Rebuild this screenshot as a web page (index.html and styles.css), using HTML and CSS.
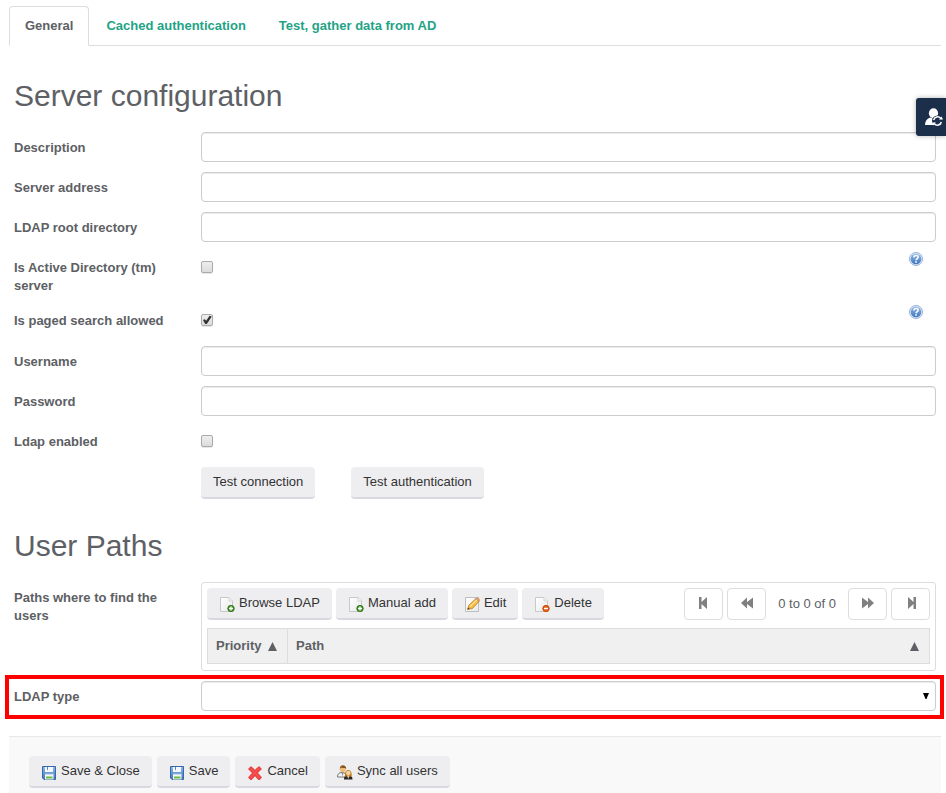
FILE: index.html
```html
<!DOCTYPE html>
<html lang="en">
<head>
<meta charset="utf-8">
<title>Server configuration</title>
<link rel="stylesheet" href="styles.css">
</head>
<body>
<svg class="defs" width="0" height="0" aria-hidden="true">
  <defs>
    <linearGradient id="blue" x1="0" y1="0" x2="0" y2="1"><stop offset="0" stop-color="#8fb8e8"/><stop offset="1" stop-color="#3f75bd"/></linearGradient>
    <linearGradient id="paper" x1="0" y1="0" x2="1" y2="1"><stop offset="0" stop-color="#ffffff"/><stop offset="1" stop-color="#e9e9e9"/></linearGradient>
  </defs>
  <symbol id="page" viewBox="0 0 16 16">
    <path d="M1.500 1.500h8.500l3.500 3.500v10.500h-12z" fill="url(#paper)" stroke="#c8c8c8"/>
    <path d="M10 1.500v3.500h3.500" fill="#f4f4f4" stroke="#d5d5d5"/>
  </symbol>
  <symbol id="page-add" viewBox="0 0 16 16">
    <use href="#page" width="16" height="16"/>
    <circle cx="12" cy="12.500" r="3.500" fill="#4e9a32"/>
    <circle cx="12" cy="12.500" r="3" fill="none" stroke="#35761f"/>
    <path d="M12 10.500v4M10 12.500h4" stroke="#fff" stroke-width="1.300"/>
  </symbol>
  <symbol id="page-delete" viewBox="0 0 16 16">
    <use href="#page" width="16" height="16"/>
    <circle cx="12" cy="12.500" r="3.500" fill="#e8661b"/>
    <circle cx="12" cy="12.500" r="3" fill="none" stroke="#c9480c"/>
    <path d="M10 12.500h4" stroke="#fff" stroke-width="1.400"/>
  </symbol>
  <symbol id="page-edit" viewBox="0 0 16 16">
    <path d="M1.500 1.500h13v14h-13z" fill="url(#paper)" stroke="#bfbfbf"/>
    <path d="M3.500 13.500l1.500-4.500 7-6.500 3 3-6.500 7z" fill="#f4b942" stroke="#bd8125" stroke-width=".8"/>
    <path d="M6 10.500l7-6.500" stroke="#ffe39a" stroke-width="1.200"/>
    <path d="M12 2.500l1-1q1 0 2.500 2l-.5 2z" fill="#e5a08a" stroke="#b98755" stroke-width=".6"/>
    <path d="M3.500 13.500l.7-2 1.500 1.300z" fill="#333"/>
  </symbol>
  <symbol id="disk" viewBox="0 0 16 16">
    <path d="M1.500 2.500h13v13h-11.500l-1.500-1.500z" fill="url(#blue)" stroke="#3469ad"/>
    <path d="M4 3h8v5h-8z" fill="#f5f9ff"/>
    <path d="M6.500 3v3" stroke="#5a88c4"/>
    <path d="M4 10h8.500v5.500h-8.500z" fill="#f4f7f3"/>
    <path d="M5 12.500h6.500v2h-6.500z" fill="#6cbb4a"/>
    <path d="M4 10h8.500" stroke="#9fc0e8"/>
  </symbol>
  <symbol id="cross" viewBox="0 0 16 16">
    <path d="M2 5l2-2q2 1.500 4 4 2-2.500 4-4l2 2q-2.500 2-4 4 2 2 4 4.500l-2 2q-2-2-4-4.500-2 2.500-4 4.500l-2-2q2-2.500 4-4.500-2-2-4-4z" fill="#fb5050" stroke="#e84444" stroke-width="1.500" stroke-linejoin="round"/>
  </symbol>
  <symbol id="users" viewBox="0 0 16 16">
    <path d="M.5 13c0-3 1.500-4.500 4.500-4.500s4.500 1.500 4.500 4.500z" fill="#f6f6f6" stroke="#777"/>
    <path d="M4.500 9l1 3.500 1-3.500z" fill="#8b9bad"/>
    <circle cx="5.800" cy="5.300" r="3" fill="#f0bd78"/>
    <path d="M2.800 5c-.5-5 6.700-5 6.400 0L8 4Q5 4 4 3.500z" fill="#88551c"/>
    <path d="M7 15.500c0-3 1-4 4-4s4.500 1 4.500 4z" fill="#262626"/>
    <path d="M8 12.500c-1-9 8-8 6.500 0z" fill="#b87818"/>
    <circle cx="11.300" cy="9" r="2.300" fill="#f8d29b"/>
    <path d="M10 11.500l1.300 3.500 1.300-3.500z" fill="#f4c68d"/>
  </symbol>
  <symbol id="help" viewBox="0 0 14 14">
    <circle cx="7" cy="7" r="6.500" fill="#e2ebf6" stroke="#93b1d8"/>
    <circle cx="7" cy="7" r="5.300" fill="url(#blue)"/>
    <path d="M5 5.500q0-2 2.100-2t2 1.800q0 1-1 1.500t-1 1.500" fill="none" stroke="#fff" stroke-width="1.600"/>
    <path d="M6.200 9.200h1.700v1.600h-1.700z" fill="#fff"/>
  </symbol>
</svg>

<nav class="tabs">
  <a class="tab tab-active" href="#general">General</a>
  <a class="tab" href="#cached">Cached authentication</a>
  <a class="tab" href="#test">Test, gather data from AD</a>
</nav>

<button class="side-button" type="button" aria-label="Switch user">
  <svg width="18" height="18" viewBox="0 0 18 18">
    <ellipse cx="8.500" cy="5.300" rx="4.600" ry="5" fill="#fff"/>
    <path d="M0 17q0-6 5.500-7.500l3 1.500 3-1.500q4 1 5 7.500z" fill="#fff"/>
    <circle cx="12.500" cy="13" r="5.500" fill="#1b2f4b"/>
    <path d="M8.700 12a4 4 0 0 1 7-1.700M16.300 14a4 4 0 0 1-7 1.700" fill="none" stroke="#fff" stroke-width="1.500"/>
    <path d="M14 11.500h4l-1.500-3zM11 14.500h-4l1.500 3z" fill="#fff"/>
  </svg>
</button>

<form>
  <main class="content">
    <h1>Server configuration</h1>
    <div class="row"><label for="description">Description</label><input class="text" id="description" type="text"></div>
    <div class="row"><label for="address">Server address</label><input class="text" id="address" type="text"></div>
    <div class="row"><label for="root">LDAP root directory</label><input class="text" id="root" type="text"></div>
    <div class="row"><label for="active">Is Active Directory (tm) server</label><div class="check"><input id="active" type="checkbox"><svg class="help"><use href="#help"/></svg></div></div>
    <div class="row"><label for="paged">Is paged search allowed</label><div class="check"><input id="paged" type="checkbox" checked><svg class="help"><use href="#help"/></svg></div></div>
    <div class="row"><label for="username">Username</label><input class="text" id="username" type="text"></div>
    <div class="row"><label for="password">Password</label><input class="text" id="password" type="password"></div>
    <div class="row"><label for="enabled">Ldap enabled</label><div class="check"><input id="enabled" type="checkbox"></div></div>
    <div class="row"><span></span><div class="tests"><button class="button" type="button">Test connection</button><button class="button" type="button">Test authentication</button></div></div>

    <h1>User Paths</h1>
    <div class="row">
      <span class="label">Paths where to find the users</span>
      <div class="panel">
        <div class="toolbar">
          <button class="button" type="button"><svg class="icon"><use href="#page-add"/></svg>Browse LDAP</button>
          <button class="button" type="button"><svg class="icon"><use href="#page-add"/></svg>Manual add</button>
          <button class="button" type="button"><svg class="icon"><use href="#page-edit"/></svg>Edit</button>
          <button class="button" type="button"><svg class="icon"><use href="#page-delete"/></svg>Delete</button>
          <div class="pager">
            <button class="page-button" type="button" aria-label="First page"><svg width="12" height="12" viewBox="0 0 12 12"><path d="M1 0h2.500v5l5.500-5v12l-5.500-5v5h-2.500z"/></svg></button>
            <button class="page-button" type="button" aria-label="Previous page"><svg width="12" height="12" viewBox="0 0 12 12"><path d="M0 6l6-5.500v4.500l6-4.500v11l-6-4.500v4.500z"/></svg></button>
            <span class="range">0 to 0 of 0</span>
            <button class="page-button" type="button" aria-label="Next page"><svg width="12" height="12" viewBox="0 0 12 12"><path d="M12 6l-6-5.500v4.500l-6-4.500v11l6-4.500v4.500z"/></svg></button>
            <button class="page-button" type="button" aria-label="Last page"><svg width="12" height="12" viewBox="0 0 12 12"><path d="M11 0h-2.500v5l-5.500-5v12l5.500-5v5h2.500z"/></svg></button>
          </div>
        </div>
        <table>
          <thead><tr>
            <th class="priority" scope="col"><div class="heading">Priority<svg class="sort" viewBox="0 0 9 9"><path d="M4.500 0l4.500 9h-9z"/></svg></div></th>
            <th scope="col"><div class="heading">Path<svg class="sort" viewBox="0 0 9 9"><path d="M4.500 0l4.500 9h-9z"/></svg></div></th>
          </tr></thead>
        </table>
      </div>
    </div>
    <div class="row marked">
      <label for="type">LDAP type</label>
      <div class="select"><select class="text" id="type"><option></option></select><svg class="arrow" viewBox="0 0 6 6"><path d="M0 0h6l-2.500 6h-1z"/></svg></div>
    </div>
  </main>

  <footer class="actions">
    <button class="button" type="button"><svg class="icon"><use href="#disk"/></svg>Save &amp; Close</button>
    <button class="button" type="button"><svg class="icon"><use href="#disk"/></svg>Save</button>
    <button class="button" type="button"><svg class="icon"><use href="#cross"/></svg>Cancel</button>
    <button class="button" type="button"><svg class="icon"><use href="#users"/></svg>Sync all users</button>
  </footer>
</form>
</body>
</html>
```
FILE: styles.css
```css
* { box-sizing: border-box; }

body {
  margin: 0;
  background: #fff;
  color: #5d6064;
  font: 13px/18px "Liberation Sans", Arial, sans-serif;
}

button, input, select { font: inherit; margin: 0; }

svg { display: block; flex: none; }
.defs { position: absolute; }

.tabs {
  display: flex;
  gap: 1px;
  height: 46px;
  margin: 0 5px 0 9px;
  padding-top: 6px;
  border-bottom: 1px solid #ddd;
}

.tab {
  height: 40px;
  padding: 10px 15px;
  border: 1px solid transparent;
  border-radius: 4px 4px 0 0;
  color: #1fa386;
  font-weight: bold;
  text-decoration: none;
}

.tab-active {
  border-color: #ddd;
  border-bottom-color: #fff;
  background: #fff;
  color: #5d6064;
}

.side-button {
  position: absolute;
  z-index: 1;
  top: 98px;
  right: 0;
  width: 30px;
  height: 38px;
  padding: 0 0 0 9px;
  border: 0;
  border-radius: 3px 0 0 3px;
  background: #1b2f4b;
  box-shadow: 0 0 5px rgba(0, 0, 0, .3);
}

.content {
  display: flex;
  flex-direction: column;
  gap: 10px;
  padding: 33px 10px 25px 14px;
}

h1 {
  margin: 0;
  font-size: 30px;
  font-weight: normal;
  line-height: 33px;
  padding-bottom: 10px;
}

.row + h1 { padding-top: 20px; }

.row {
  display: grid;
  grid-template-columns: 157px 1fr;
  column-gap: 30px;
}

.row > label, .label {
  padding-top: 7px;
  font-weight: bold;
}

.text {
  width: 100%;
  height: 30px;
  padding: 5px 8px;
  border: 1px solid #ccc;
  border-radius: 4px;
  background: #fff;
  box-shadow: inset 0 1px 1px rgba(0, 0, 0, .08);
  appearance: none;
}

.check {
  display: flex;
  justify-content: space-between;
  min-height: 31px;
  padding-right: 13px;
}

.check input {
  width: 12px;
  height: 12px;
  margin-top: 9px;
  border: 1px solid #aaa;
  border-radius: 2px;
  background: linear-gradient(#eee, #dcdcdc);
  box-shadow: 0 1px 1px rgba(0, 0, 0, .1);
  appearance: none;
}

.check input:checked::before {
  content: "";
  display: block;
  width: 10px;
  height: 10px;
  background: #333;
  clip-path: polygon(10% 50%, 28% 42%, 42% 58%, 75% 8%, 98% 16%, 48% 90%, 32% 90%);
}

.help { width: 14px; height: 14px; }

.tests { display: flex; gap: 36px; }

.button {
  display: flex;
  align-items: center;
  gap: 4px;
  height: 32px;
  padding: 0 12px;
  border: 0;
  border-bottom: 2px solid #d8d8e0;
  border-radius: 4px;
  background: #eeeef0;
  color: #333;
  white-space: nowrap;
}

.icon { width: 16px; height: 16px; margin-top: 2px; }

.panel {
  padding: 5px 5px 6px;
  border: 1px solid #ddd;
  border-radius: 3px;
}

.toolbar {
  display: flex;
  gap: 4px;
  margin-bottom: 8px;
}

.pager {
  display: flex;
  align-items: center;
  gap: 4px;
  margin-left: auto;
}

.page-button {
  display: flex;
  align-items: center;
  justify-content: center;
  width: 39px;
  height: 32px;
  padding: 0 0 2px;
  border: 1px solid #ddd;
  border-radius: 4px;
  background: #fff;
  fill: #808080;
}

.range { padding: 0 8px; }

table {
  width: 100%;
  border-collapse: collapse;
  background: #f0f0f0;
}

th {
  height: 35px;
  padding: 0 8px;
  border: 1px solid #ddd;
}

.priority { width: 80px; }

.heading {
  display: flex;
  align-items: center;
  justify-content: space-between;
}

.sort { width: 9px; height: 9px; margin: 0 2px; fill: #5d6064; }

.marked { position: relative; }

.marked::after {
  content: "";
  position: absolute;
  inset: -6px -8px -8px -9px;
  border: 4px solid #f00;
  pointer-events: none;
}

.select { position: relative; }

.arrow {
  position: absolute;
  top: 12px;
  right: 7px;
  width: 6px;
  height: 6px;
  fill: #000;
  pointer-events: none;
}

.actions {
  display: flex;
  gap: 5px;
  margin: 0 5px 0 9px;
  padding: 19px 20px 5px;
  border-top: 1px solid #e8e8e8;
  background: #f9f9f9;
}
```
